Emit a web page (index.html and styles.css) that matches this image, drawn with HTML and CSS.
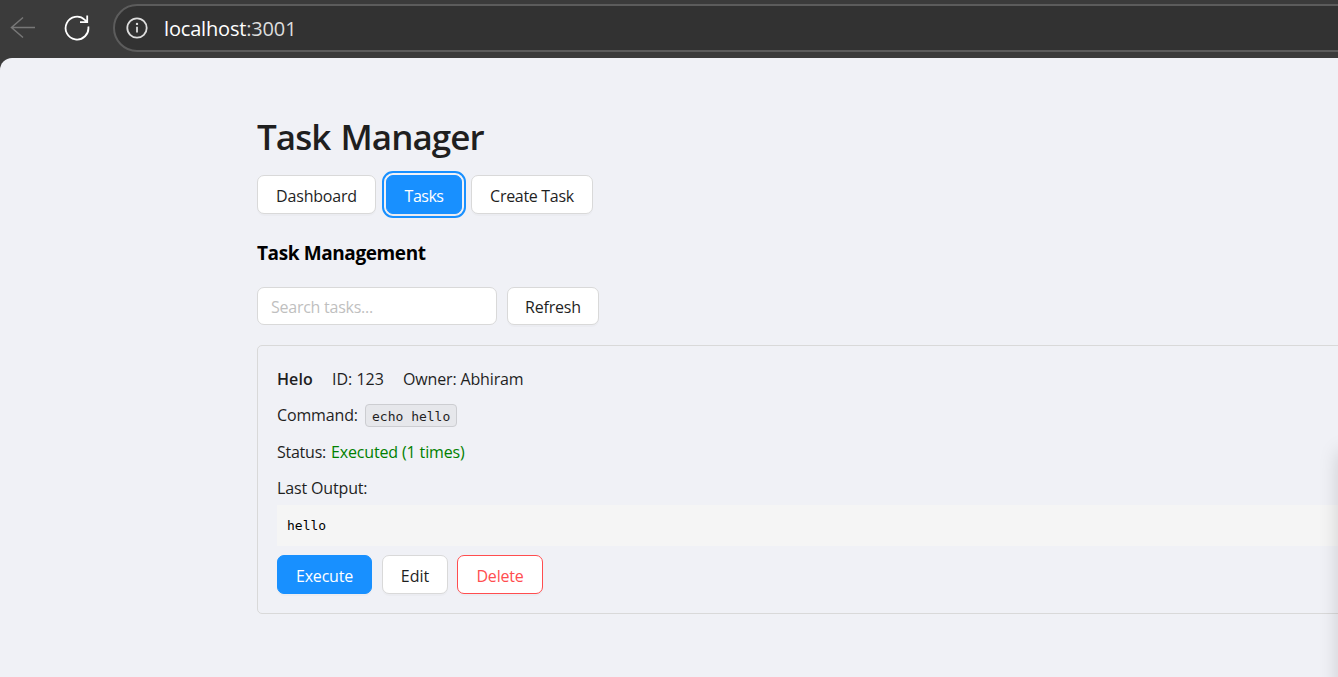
FILE: index.html
```html
<!DOCTYPE html>
<html lang="en">
<head>
<meta charset="utf-8">
<title>Task Manager</title>
<link rel="stylesheet" href="styles.css">
</head>
<body>
<header class="browser">
  <svg class="back" width="26" height="24" viewBox="0 0 26 24"><path d="M13 1.5 1.5 11.5l11.5 10M1.5 11.5H25"/></svg>
  <svg class="reload" width="26" height="26" viewBox="0 0 26 26"><path d="M24.3 11.5A11.4 11.4 0 1 1 20.8 4.8L23 7M23.2 0.5V7.2H16"/></svg>
  <div class="address">
    <svg class="info" width="22" height="22" viewBox="0 0 22 22"><circle cx="11" cy="11" r="9.7"/><path d="M11 9.7V15.5"/><circle class="dot" cx="11" cy="6.9" r="1.2"/></svg>
    <span class="url">localhost<span class="port">:3001</span></span>
  </div>
</header>
<div class="viewport">
  <main class="page">
    <h1 class="title">Task Manager</h1>
    <nav class="row nav">
      <button class="btn dashboard">Dashboard</button>
      <button class="btn primary focused">Tasks</button>
      <button class="btn create">Create Task</button>
    </nav>
    <h3 class="subtitle">Task Management</h3>
    <div class="row search-row">
      <input class="search" type="text" placeholder="Search tasks...">
      <button class="btn refresh">Refresh</button>
    </div>
    <section class="card">
      <p class="line meta"><strong class="name">Helo</strong><span class="id">ID: 123</span><span class="owner">Owner: Abhiram</span></p>
      <p class="line command"><span class="label">Command:</span><code class="code">echo hello</code></p>
      <p class="line status"><span class="label">Status:</span><span class="done">Executed (1 times)</span></p>
      <p class="line last">Last Output:</p>
      <pre class="output">hello</pre>
      <div class="row">
        <button class="btn primary execute">Execute</button>
        <button class="btn edit">Edit</button>
        <button class="btn danger">Delete</button>
      </div>
    </section>
  </main>
  <div class="edge"></div>
</div>
</body>
</html>
```
FILE: styles.css
```css
* { box-sizing: border-box; }
body { margin: 0; width: 1338px; height: 677px; overflow: hidden; background: #3b3b3b; font: 16px/24px "Open Sans", "Noto Sans", sans-serif; color: #1f1f1f; }
.browser { display: flex; align-items: center; height: 58px; padding: 0 0 2px 10px; }
.browser svg { flex: none; fill: none; stroke-width: 1.5; }
.back { stroke: #777; }
.reload { margin-left: 28px; stroke: #fff; }
.address { display: flex; align-items: center; width: 1260px; height: 48px; flex: none; margin-left: 23px; padding-left: 11px; border: 2px solid #5c5c5c; border-radius: 24px; background: #323232; }
.browser .reload, .browser .info { stroke-width: 1.8; }
.info { stroke: #ddd; }
.info .dot { fill: #ddd; stroke: none; }
.url { margin-left: 16px; padding-top: 1px; font-size: 20px; letter-spacing: -0.17px; color: #fff; white-space: nowrap; }
.port { color: #ddd; }
.viewport { position: relative; height: 619px; overflow: hidden; border-radius: 12px 0 0 0; background: #f0f1f6; }
.page { width: 1200px; padding: 54px 0 0 257px; box-sizing: content-box; }
.title { margin: 0; height: 50px; font-size: 35px; line-height: 49px; font-weight: 600; white-space: nowrap; letter-spacing: -0.95px; word-spacing: 2px; }
.row { display: flex; gap: 10px; }
.nav { margin-top: 13px; }
.btn { flex: none; height: 39px; padding: 2px 0 0; border: 1px solid #d9d9d9; border-radius: 7px; background: #fff; color: #1f1f1f; font: inherit; letter-spacing: -0.2px; text-align: center; box-shadow: 0 2px 0 rgba(0,0,0,.02); white-space: nowrap; }
.dashboard { width: 119px; }
.focused { width: 76px; outline: 2px solid #1890ff; outline-offset: 2px; letter-spacing: -0.5px; }
.create { width: 122px; margin-left: -1px; letter-spacing: -0.3px; }
.primary { background: #1890ff; border-color: #1890ff; color: #fff; }
.danger { width: 86px; margin-left: -1px; border-color: #ff4d4f; color: #ff4d4f; }
.execute { width: 95px; }
.edit { width: 66px; letter-spacing: 0; }
.refresh { width: 92px; height: 38px; }
.subtitle { margin: 25px 0 0; font-size: 19px; line-height: 28px; font-weight: 700; letter-spacing: -0.4px; color: #000; white-space: nowrap; }
.search-row { margin-top: 20px; }
.search { width: 240px; height: 38px; padding: 2px 13px 0; border: 1px solid #d9d9d9; border-radius: 7px; background: #fff; font: inherit; letter-spacing: -0.25px; }
.search::placeholder { color: #bfbfbf; opacity: 1; }
.card { width: 1200px; height: 269px; margin-top: 20px; padding: 21px 19px; border: 1px solid #d9d9d9; border-radius: 5px; }
.line { display: flex; align-items: center; height: 24px; margin: 0 0 12.4px; letter-spacing: -0.15px; white-space: nowrap; }
.name { width: 55px; font-weight: 600; letter-spacing: 0.1px; }
.id { width: 71px; letter-spacing: 0; }
.command .label { width: 88px; }
.code { height: 23px; width: 92px; padding: 0 6px; border: 1px solid #cccdd1; border-radius: 4px; background: #e6e7eb; font: 13px/23px "DejaVu Sans Mono", monospace; letter-spacing: 0; }
.status .label { width: 54px; letter-spacing: -0.25px; }
.done { color: #008000; }
.last { margin-bottom: 5px; }
.output { margin: 0 0 9px; height: 41px; padding: 0 10px; background: #f5f5f5; color: #000; font: 13px/41px "DejaVu Sans Mono", monospace; }
.edge { position: absolute; right: -21px; top: 394px; width: 20px; height: 320px; box-shadow: 0 0 20px rgba(0,0,0,.17); }
```
